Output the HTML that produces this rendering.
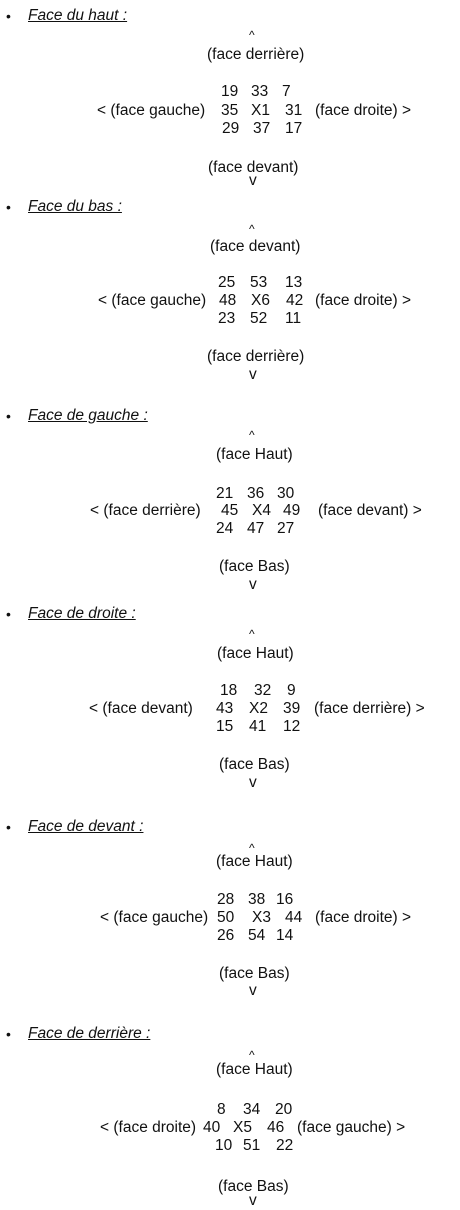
<!DOCTYPE html>
<html><head><meta charset="utf-8"><style>
body{margin:0;width:460px;height:1210px;background:#fff;position:relative;font-family:"Liberation Sans",Arial,sans-serif;font-size:15.5px;color:#111;overflow:hidden}
div{position:absolute;white-space:pre;line-height:16px}
.h{font-style:italic;text-decoration:underline;left:28px}
.b{left:6px;font-size:14px}
.c{font-size:12px}
</style></head><body>
<div class="b" style="top:8px">•</div><div class="h" style="top:8px">Face du haut :</div>
<div class="c" style="top:27px;left:249px">^</div>
<div style="top:47px;left:207px">(face derrière)</div>
<div style="top:84px;left:221px">19</div><div style="top:84px;left:251px">33</div><div style="top:84px;left:282px">7</div>
<div style="top:103px;left:97px">&lt; (face gauche)</div><div style="top:103px;left:221px">35</div><div style="top:103px;left:251px">X1</div><div style="top:103px;left:285px">31</div><div style="top:103px;left:315px">(face droite) &gt;</div>
<div style="top:121px;left:222px">29</div><div style="top:121px;left:253px">37</div><div style="top:121px;left:285px">17</div>
<div style="top:160px;left:208px">(face devant)</div>
<div style="top:173px;left:249px">v</div>

<div class="b" style="top:199px">•</div><div class="h" style="top:199px">Face du bas :</div>
<div class="c" style="top:221px;left:249px">^</div>
<div style="top:239px;left:210px">(face devant)</div>
<div style="top:275px;left:218px">25</div><div style="top:275px;left:250px">53</div><div style="top:275px;left:285px">13</div>
<div style="top:293px;left:98px">&lt; (face gauche)</div><div style="top:293px;left:219px">48</div><div style="top:293px;left:251px">X6</div><div style="top:293px;left:286px">42</div><div style="top:293px;left:315px">(face droite) &gt;</div>
<div style="top:311px;left:218px">23</div><div style="top:311px;left:250px">52</div><div style="top:311px;left:285px">11</div>
<div style="top:349px;left:207px">(face derrière)</div>
<div style="top:367px;left:249px">v</div>

<div class="b" style="top:408px">•</div><div class="h" style="top:408px">Face de gauche :</div>
<div class="c" style="top:427px;left:249px">^</div>
<div style="top:447px;left:216px">(face Haut)</div>
<div style="top:486px;left:216px">21</div><div style="top:486px;left:247px">36</div><div style="top:486px;left:277px">30</div>
<div style="top:503px;left:90px">&lt; (face derrière)</div><div style="top:503px;left:221px">45</div><div style="top:503px;left:252px">X4</div><div style="top:503px;left:283px">49</div><div style="top:503px;left:318px">(face devant) &gt;</div>
<div style="top:521px;left:216px">24</div><div style="top:521px;left:247px">47</div><div style="top:521px;left:277px">27</div>
<div style="top:559px;left:219px">(face Bas)</div>
<div style="top:577px;left:249px">v</div>

<div class="b" style="top:606px">•</div><div class="h" style="top:606px">Face de droite :</div>
<div class="c" style="top:626px;left:249px">^</div>
<div style="top:646px;left:217px">(face Haut)</div>
<div style="top:683px;left:220px">18</div><div style="top:683px;left:254px">32</div><div style="top:683px;left:287px">9</div>
<div style="top:701px;left:89px">&lt; (face devant)</div><div style="top:701px;left:216px">43</div><div style="top:701px;left:249px">X2</div><div style="top:701px;left:283px">39</div><div style="top:701px;left:314px">(face derrière) &gt;</div>
<div style="top:719px;left:216px">15</div><div style="top:719px;left:249px">41</div><div style="top:719px;left:283px">12</div>
<div style="top:757px;left:219px">(face Bas)</div>
<div style="top:775px;left:249px">v</div>

<div class="b" style="top:819px">•</div><div class="h" style="top:819px">Face de devant :</div>
<div class="c" style="top:840px;left:249px">^</div>
<div style="top:854px;left:216px">(face Haut)</div>
<div style="top:892px;left:217px">28</div><div style="top:892px;left:248px">38</div><div style="top:892px;left:276px">16</div>
<div style="top:910px;left:100px">&lt; (face gauche)</div><div style="top:910px;left:217px">50</div><div style="top:910px;left:252px">X3</div><div style="top:910px;left:285px">44</div><div style="top:910px;left:315px">(face droite) &gt;</div>
<div style="top:928px;left:217px">26</div><div style="top:928px;left:248px">54</div><div style="top:928px;left:276px">14</div>
<div style="top:966px;left:219px">(face Bas)</div>
<div style="top:983px;left:249px">v</div>

<div class="b" style="top:1026px">•</div><div class="h" style="top:1026px">Face de derrière :</div>
<div class="c" style="top:1047px;left:249px">^</div>
<div style="top:1062px;left:216px">(face Haut)</div>
<div style="top:1102px;left:217px">8</div><div style="top:1102px;left:243px">34</div><div style="top:1102px;left:275px">20</div>
<div style="top:1120px;left:100px">&lt; (face droite)</div><div style="top:1120px;left:203px">40</div><div style="top:1120px;left:233px">X5</div><div style="top:1120px;left:267px">46</div><div style="top:1120px;left:297px">(face gauche) &gt;</div>
<div style="top:1138px;left:215px">10</div><div style="top:1138px;left:243px">51</div><div style="top:1138px;left:276px">22</div>
<div style="top:1179px;left:218px">(face Bas)</div>
<div style="top:1193px;left:249px">v</div>
</body></html>
